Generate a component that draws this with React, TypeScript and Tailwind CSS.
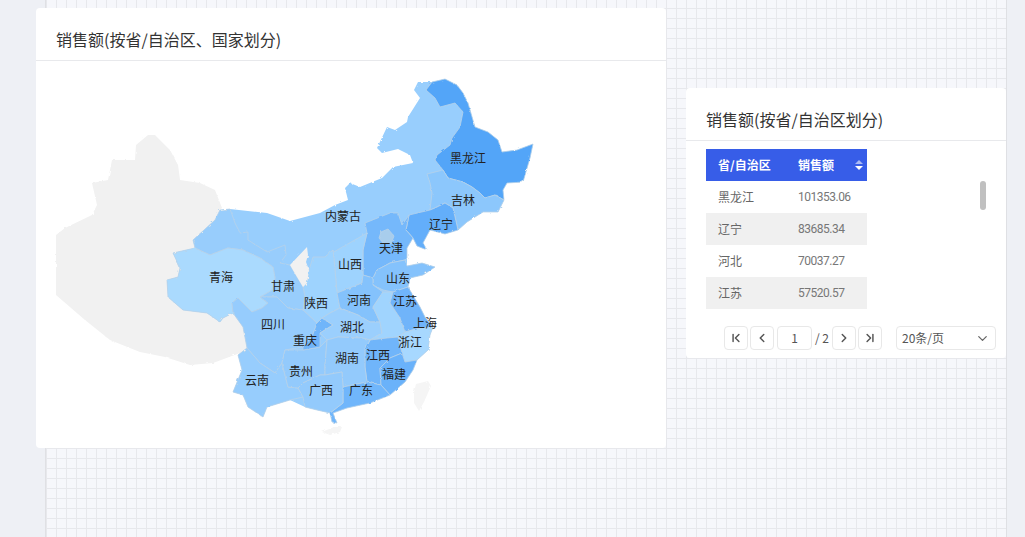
import { ChevronDown, ChevronFirst, ChevronLast, ChevronLeft, ChevronRight } from 'lucide-react';

const font = "font-['Noto_Sans_CJK_SC','Noto_Sans',sans-serif]";

const outside = [
  { fill: '#f1f1f1', pts: '56,235 65,228 92,215 97,205 92,183 108,180 112,160 135,160 136,145 148,135 155,135 170,150 178,165 180,180 200,183 215,190 222,208 220,210 215,220 193,240 195,248 173,253 180,268 178,277 167,280 168,297 183,310 207,313 220,322 223,318 233,313 243,327 247,348 240,353 213,363 190,365 165,357 140,352 110,340 85,320 56,295' },
  { fill: '#f5f5f5', pts: '416,384 428,381 431,386 424,402 419,411 414,403 414,392' },
  { fill: '#f5f5f5', pts: '322,432 334,427 342,427 340,432 330,435' },
];

// mainland silhouette, sits under the provinces so no gaps show between them
const mainland = '220,210 230,209 267,213 290,221 320,213 335,205 348,200 345,188 350,183 360,187 382,178 393,167 413,163 410,155 398,149 382,153 377,148 387,127 395,130 407,122 408,117 420,98 414,90 418,82 432,82 445,79 457,85 463,93 468,103 475,127 488,132 498,140 502,152 517,150 533,144 530,158 523,182 507,183 503,190 504,200 498,212 483,212 467,222 458,230 445,234 430,230 423,243 427,250 417,246 413,238 407,248 407,258 407,266 422,263 435,267 423,275 410,278 408,287 420,307 425,317 433,327 430,335 428,350 417,360 413,370 405,382 390,395 370,403 347,408 333,413 337,423 332,422 330,413 317,410 305,407 290,400 267,407 263,417 248,407 243,395 233,392 242,370 238,355 247,348 243,327 233,313 223,318 220,322 207,313 183,310 168,297 167,280 178,277 180,268 173,253 195,248 193,240 215,220';

const regions = [
  { fill: '#52a5f8', pts: '426,90 432,82 445,79 457,85 463,93 468,103 475,127 488,132 498,140 502,152 517,150 533,144 530,158 523,182 507,183 503,190 504,200 495,195 485,198 480,193 472,187 463,182 448,178 443,170 435,160 437,155 450,145 452,138 460,127 463,112 455,103 440,107 435,98' },
  { fill: '#8cc7fc', pts: '427,174 443,170 448,178 463,182 472,187 480,193 485,198 495,195 504,200 498,212 483,212 467,222 458,230 453,208 445,203 435,208 430,210 432,193 430,183' },
  { fill: '#64aefa', pts: '409,215 430,210 435,208 445,203 453,208 458,230 445,234 430,230 423,243 427,250 417,246 413,238 406,230' },
  { fill: '#74b8fb', pts: '365,223 390,213 398,213 402,225 409,215 406,230 413,238 407,248 407,258 405,260 390,263 377,270 373,278 363,275 363,250 367,233' },
  { fill: '#a8cdec', pts: '381,232 388,229 394,236 391,244 383,243 379,238' },
  { fill: '#9ed3fe', pts: '325,257 367,233 363,250 363,273 362,283 337,293 335,270 333,250' },
  { fill: '#9ed3fe', pts: '313,257 325,257 333,250 335,270 337,293 340,308 330,313 322,318 317,323 303,310 305,297 303,287 307,283 309,270' },
  { fill: '#84c2fc', pts: '373,278 377,270 390,263 405,260 407,266 422,263 435,267 423,275 410,278 408,287 393,292 383,290 373,285' },
  { fill: '#84c2fc', pts: '337,293 362,283 363,275 373,278 373,285 383,292 373,307 380,322 370,322 358,315 340,308' },
  { fill: '#98cdfc', pts: '220,210 230,209 235,223 240,233 248,232 248,240 267,252 285,245 286,255 280,263 290,265 297,277 303,287 305,297 303,310 288,308 277,297 260,297 272,290 275,278 273,267 260,258 243,250 228,248 210,255 195,248 193,240 215,220' },
  { fill: '#aadafe', pts: '173,253 195,248 210,255 228,248 243,250 260,258 273,267 275,278 272,290 260,297 268,303 262,308 252,312 238,298 232,303 233,313 223,318 220,322 207,313 183,310 168,297 167,280 178,277 180,268' },
  { fill: '#96ccfd', pts: '238,298 252,312 262,308 268,303 260,297 277,297 288,308 303,310 317,323 312,337 303,347 285,350 282,363 275,373 260,363 247,348 243,327 233,313 232,303' },
  { fill: '#97cdfd', pts: '247,348 260,363 275,373 282,363 288,387 298,388 303,397 290,400 267,407 263,417 248,407 243,395 233,392 242,370 238,355' },
  { fill: '#93cafc', pts: '282,363 285,350 303,350 320,347 327,340 325,365 325,375 320,375 303,383 298,388 288,387' },
  { fill: '#6fb5fa', pts: '317,323 322,318 333,325 320,333 320,347 303,350 303,347 312,337' },
  { fill: '#9bcffd', pts: '330,313 340,308 358,315 370,322 380,322 382,333 370,340 362,338 338,337 327,340 320,333 333,325 322,318' },
  { fill: '#a0d4fe', pts: '383,292 393,292 390,303 400,318 405,332 398,337 387,338 370,340 382,333 380,322 373,307' },
  { fill: '#6fb4fa', pts: '393,292 408,287 420,307 425,317 433,327 420,328 405,332 400,318 390,303' },
  { fill: '#a7d8ff', pts: '405,332 420,328 433,327 430,335 428,350 417,360 405,362 402,353 398,337' },
  { fill: '#6fb5fa', pts: '365,350 370,340 387,338 398,337 402,353 390,358 380,368 381,385 367,382 365,367' },
  { fill: '#6bb2fa', pts: '402,353 405,362 417,360 413,370 405,382 390,395 381,385 380,368 390,358' },
  { fill: '#93cafc', pts: '327,340 338,337 362,338 370,340 365,350 365,367 367,382 343,387 342,372 325,375 325,365' },
  { fill: '#70b6fb', pts: '343,387 367,382 381,385 390,395 370,403 347,408 333,413 337,423 332,422 330,413 343,403' },
  { fill: '#93cafc', pts: '298,388 303,383 320,375 325,375 342,372 343,387 343,403 330,413 317,410 305,407 303,397' },
];

const ningxia = '290,265 307,247 308,255 306,262 309,270 307,283 303,287 297,277';

const labels: [string, number, number][] = [
  ['黑龙江', 468, 158], ['吉林', 463, 200], ['辽宁', 441, 224], ['内蒙古', 343, 216],
  ['天津', 391, 248], ['山西', 350, 264], ['山东', 398, 278], ['青海', 221, 277],
  ['甘肃', 283, 286], ['陕西', 316, 303], ['河南', 359, 300], ['江苏', 405, 301],
  ['四川', 273, 324], ['湖北', 352, 327], ['上海', 425, 323], ['重庆', 305, 340],
  ['浙江', 410, 342], ['江西', 378, 355], ['湖南', 347, 358], ['贵州', 301, 371],
  ['福建', 394, 374], ['云南', 257, 380], ['广西', 321, 390], ['广东', 361, 390],
];

const rows = [
  ['黑龙江', '101353.06'],
  ['辽宁', '83685.34'],
  ['河北', '70037.27'],
  ['江苏', '57520.57'],
];

function ChinaMap() {
  return (
    <svg viewBox="36 61 630 387" className="block w-[630px] h-[387px]">
      <defs>
        <filter id="rough" x="-5%" y="-5%" width="110%" height="110%">
          <feTurbulence type="fractalNoise" baseFrequency="0.25" numOctaves="2" seed="4" />
          <feDisplacementMap in="SourceGraphic" scale="2.5" />
          <feGaussianBlur stdDeviation="0.25" />
        </filter>
      </defs>
      <g filter="url(#rough)">
        {outside.map((o, i) => (
          <polygon key={i} points={o.pts} fill={o.fill} />
        ))}
        <polygon points={mainland} fill="#98cefd" />
        {regions.map((r, i) => (
          <polygon key={i} points={r.pts} fill={r.fill} stroke="#b8d2e8" strokeWidth="0.8" strokeLinejoin="round" />
        ))}
        <polygon points={ningxia} fill="#f1f1f1" />
      </g>
      {labels.map(([name, x, y]) => (
        <text key={name} x={x} y={y + 5} textAnchor="middle" fontSize="12" fill="#222" fontFamily="'Noto Sans CJK SC', sans-serif">
          {name}
        </text>
      ))}
    </svg>
  );
}

function PageButton({ children }: { children: React.ReactNode }) {
  return (
    <button className="w-6 h-6 flex items-center justify-center border border-[#e8e8e8] rounded-sm bg-white text-[#555]">
      {children}
    </button>
  );
}

export default function App() {
  return (
    <div className={`${font} flex h-[537px] w-[1025px] overflow-hidden bg-[#eef0f5]`}>
      <div className="w-[46px] shrink-0 border-r border-[#dfe0e4]" />
      <div className="relative w-[960px] shrink-0 bg-[#f6f7fb] bg-[linear-gradient(#e7e8ec_1px,transparent_1px),linear-gradient(90deg,#e7e8ec_1px,transparent_1px)] bg-[size:10px_10px] bg-[position:0px_8px]">
        <div className="absolute left-[-10px] top-2 w-[630px] h-[440px] bg-white rounded">
          <div className="h-[53px] border-b border-[#e8e9ec] pl-5 pt-[19px] text-base leading-6 text-[#333]">
            销售额(按省/自治区、国家划分)
          </div>
          <ChinaMap />
        </div>

        <div className="absolute left-[640px] top-[88px] w-[320px] h-[270px] bg-white rounded">
          <div className="h-[53px] border-b border-[#e8e9ec] pl-5 pt-[19px] text-base leading-6 text-[#333]">
            销售额(按省/自治区划分)
          </div>
          <div className="relative ml-5 mt-2 w-[161px]">
            <div className="flex items-center h-8 bg-[#375de8] text-white text-xs font-bold">
              <div className="w-20 pl-3">省/自治区</div>
              <div className="flex-1 pl-3">销售额</div>
              <div className="w-[17px] flex flex-col items-center gap-[2px]">
                <span className="w-0 h-0 border-x-4 border-x-transparent border-b-[4px] border-b-[#a9b9f3]" />
                <span className="w-0 h-0 border-x-4 border-x-transparent border-t-[4px] border-t-white" />
              </div>
            </div>
            {rows.map(([name, value], i) => (
              <div key={name} className={`flex items-center h-8 text-xs text-[#666] ${i % 2 === 1 ? 'bg-[#f0f0f0]' : 'bg-white'}`}>
                <div className="w-20 pl-3">{name}</div>
                <div className="flex-1 pl-3 text-[#777] tracking-[-0.5px] font-['Roboto',sans-serif]">{value}</div>
              </div>
            ))}
          </div>
          <div className="absolute left-[294px] top-[93px] w-[6px] h-[29px] rounded-full bg-[#c0c0c0]" />
          <div className="absolute right-[10px] top-[238px] flex items-center text-xs text-[#555]">
            <PageButton><ChevronFirst size={14} strokeWidth={2.5} /></PageButton>
            <div className="ml-[2px]"><PageButton><ChevronLeft size={14} strokeWidth={2.5} /></PageButton></div>
            <div className="ml-[3px] w-[35px] h-6 flex items-center justify-center border border-[#e8e8e8] rounded-sm">1</div>
            <span className="w-5 text-center">/ 2</span>
            <PageButton><ChevronRight size={14} strokeWidth={2.5} /></PageButton>
            <div className="ml-[2px]"><PageButton><ChevronLast size={14} strokeWidth={2.5} /></PageButton></div>
            <div className="ml-[14px] w-[100px] h-6 flex items-center justify-between px-[5px] border border-[#e8e8e8] rounded-sm">
              <span>20条/页</span>
              <ChevronDown size={15} className="text-[#666]" />
            </div>
          </div>
        </div>
      </div>
      <div className="flex-1 border-l border-[#dfe0e4]" />
    </div>
  );
}
